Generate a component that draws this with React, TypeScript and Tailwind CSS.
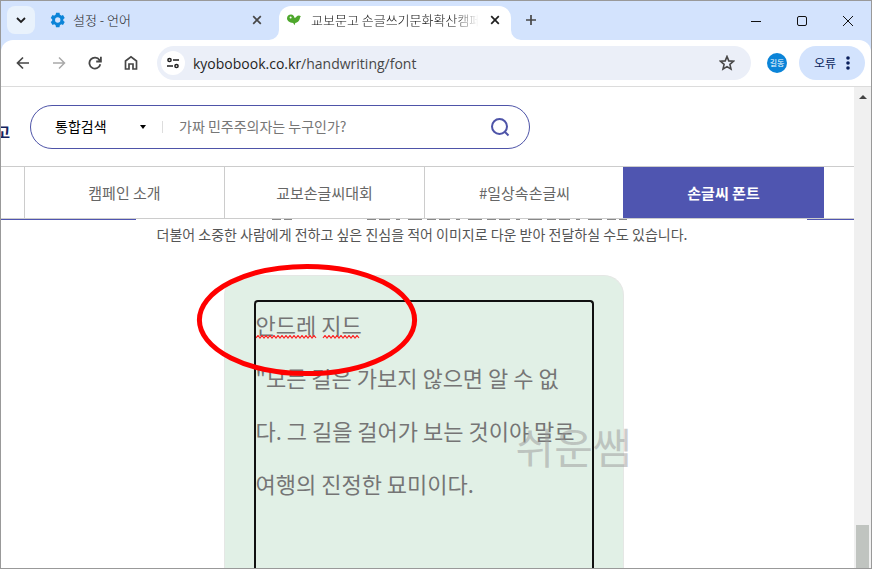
import React, { useState } from 'react';

const menus = ['캠페인 소개', '교보손글씨대회', '#일상속손글씨', '손글씨 폰트'];

const quote = `안드레 지드
"모든 길은 가보지 않으면 알 수 없
다. 그 길을 걸어가 보는 것이야 말로
여행의 진정한 묘미이다.`;

const iconButton = 'flex size-9 items-center justify-center';

const GearIcon = () => (
    <svg viewBox="0 0 24 24" className="size-4 shrink-0" fill="#0b84d8">
        <path d="M21.4 13.2a9 9 0 0 0 0-2.4l2.2-1.8-2.6-4.5-2.7 1a9 9 0 0 0-2-1.2L15.8 1.3h-5.200L9.9 4.3a9 9 0 0 0-2 1.2l-2.7-1L2.6 9l2.2 1.8a9 9 0 0 0 0 2.4L2.6 15l2.6 4.5 2.7-1a9 9 0 0 0 2 1.2l.6 3h5.2l.6-3a9 9 0 0 0 2-1.2l2.7 1 2.6-4.5zM13.1 16a4 4 0 1 1 0-8 4 4 0 0 1 0 8z" />
    </svg>
);

const LeafIcon = () => (
    <svg viewBox="0 0 14 14" className="size-3.5 shrink-0">
        <path d="M4 1.500C6 1.500 7.200 2.800 7.400 4.800C8.300 4.900 9 4.300 9.600 3.500C10.800 2.200 12.500 2.300 14 3.300C13.300 3.300 13.200 4.500 12.800 5.800C12 8.200 10.300 9.700 8.300 10L7.500 12.300L6.200 10C2.500 9.600 0 7.800 0 5.200C0 3 1.800 1.500 4 1.500z" fill="#4ea72c" />
        <circle cx="3.600" cy="4.600" r="1" fill="#fff" />
    </svg>
);

const CloseIcon = ({ color }: { color: string }) => (
    <svg viewBox="0 0 10 10" className="size-2.5" stroke={color} strokeWidth="1.7">
        <path d="M1.2 1.2l7.6 7.6M8.8 1.2L1.2 8.8" />
    </svg>
);

const TabStrip = () => (
    <div className="flex h-[39px] shrink-0 items-end bg-[#d3e3fd]">
        <div className="flex h-9 w-[34px] shrink-0 items-start justify-end">
            <button aria-label="탭 검색" className="mt-0.5 flex size-7 items-center justify-center rounded-lg bg-[#e9f2fc]">
                <svg viewBox="0 0 10 10" className="size-2.5" fill="none" stroke="#1f1f1f" strokeWidth="1.8">
                    <path d="M1 3l4 4 4-4" />
                </svg>
            </button>
        </div>
        <div className="flex h-9 w-[244px] shrink-0 items-center pb-1 pl-3.5">
            <GearIcon />
            <span className="ml-2 flex-1 text-[13px] font-light text-[#222]">설정 - 언어</span>
            <button aria-label="설정 탭 닫기" className="mr-3.5 flex size-4 items-center justify-center">
                <CloseIcon color="#474747" />
            </button>
        </div>
        <div className="relative flex h-[34px] w-[232px] shrink-0 items-center rounded-t-xl bg-white pb-1.5 pl-2">
            <svg viewBox="0 0 10 10" className="absolute right-full bottom-0 size-2.5" fill="#fff"><path d="M10 0v10H0A10 10 0 0 0 10 0z" /></svg>
            <svg viewBox="0 0 10 10" className="absolute bottom-0 left-full size-2.5" fill="#fff"><path d="M0 0v10h10A10 10 0 0 1 0 0z" /></svg>
            <LeafIcon />
            <span className="ml-2.5 w-[168px] overflow-hidden bg-linear-to-r from-[#111] from-85% to-transparent bg-clip-text text-[13px] font-light whitespace-nowrap text-transparent">
                교보문고 손글쓰기문화확산캠페인
            </span>
            <button aria-label="탭 닫기" className="ml-2 flex size-4 items-center justify-center">
                <CloseIcon color="#1f1f1f" />
            </button>
        </div>
        <button aria-label="새 탭" className="mb-1 ml-1 flex size-8 items-center justify-center">
            <svg viewBox="0 0 12 12" className="size-3" stroke="#474747" strokeWidth="1.7"><path d="M6 1v10M1 6h10" /></svg>
        </button>
        <div className="ml-auto flex h-full items-center">
            <button aria-label="최소화" className="flex w-[46px] justify-center">
                <svg viewBox="0 0 10 10" className="size-2.5" stroke="#111"><path d="M0 5.5h10" /></svg>
            </button>
            <button aria-label="최대화" className="flex w-[46px] justify-center">
                <svg viewBox="0 0 10 10" className="size-2.5" fill="none" stroke="#111"><rect x=".5" y=".5" width="9" height="9" rx="1.5" /></svg>
            </button>
            <button aria-label="닫기" className="flex w-[46px] justify-center">
                <svg viewBox="0 0 10 10" className="size-2.5" stroke="#111"><path d="M0 0l10 10M10 0L0 10" /></svg>
            </button>
        </div>
    </div>
);

const Toolbar = () => (
    <div className="shrink-0 bg-[#d3e3fd]">
        <div className="flex h-[47px] items-center rounded-t-xl border-b border-[#dcdcdc] bg-white pr-1.5 pl-1">
            <button aria-label="뒤로" className={iconButton}>
                <svg viewBox="0 0 14 14" className="size-3.5" fill="none" stroke="#474747" strokeWidth="1.7"><path d="M13 7H2M7 1.5L1.5 7 7 12.5" /></svg>
            </button>
            <button aria-label="앞으로" className={iconButton}>
                <svg viewBox="0 0 14 14" className="size-3.5" fill="none" stroke="#a9a9a9" strokeWidth="1.5"><path d="M1 7h11M7 1.5L12.5 7 7 12.5" /></svg>
            </button>
            <button aria-label="새로고침" className={iconButton}>
                <svg viewBox="0 0 14 14" className="size-3.5" fill="none" stroke="#474747" strokeWidth="1.8"><path d="M12.3 8.2A5.5 5.5 0 1 1 11.5 4L12.7 5.3M12.9.8v4.7H8.2" /></svg>
            </button>
            <button aria-label="홈" className={iconButton}>
                <svg viewBox="0 0 14 16" className="h-4 w-3.5" fill="none" stroke="#474747" strokeWidth="1.7"><path d="M1.5 14V6L7 1.8 12.5 6v8H9V9H5v5z" /></svg>
            </button>
            <div className="ml-2 flex h-[34px] flex-1 items-center rounded-full bg-[#ebeff8] pr-4 pl-1">
                <button aria-label="사이트 정보" className="flex size-6 items-center justify-center rounded-full bg-white">
                    <svg viewBox="0 0 12 12" className="size-3" fill="none" stroke="#1f1f1f" strokeWidth="1.5">
                        <circle cx="2.5" cy="3" r="1.6" /><path d="M6 3h6M0 9h6" /><circle cx="9.5" cy="9" r="1.6" />
                    </svg>
                </button>
                <div className="ml-2 flex-1 font-['Open_Sans'] text-[14px] text-[#474747]">
                    <span className="text-[#1f1f1f]">kyobobook.co.kr</span>/handwriting/font
                </div>
                <button aria-label="북마크">
                    <svg viewBox="0 0 16 16" className="size-4" fill="none" stroke="#474747" strokeWidth="1.6"><path d="M8 1.500l1.8 4.400 4.700.4-3.600 3.100 1.100 4.700L8 11.600l-4 2.500 1.100-4.700-3.600-3.100 4.700-.4z" /></svg>
                </button>
            </div>
            <button className="ml-4 size-5 rounded-full bg-[#0b84d8] text-[8px] leading-5 text-white">길동</button>
            <button className="ml-3 flex h-[34px] w-[66px] items-center justify-center gap-2.5 rounded-full bg-[#d3e3fd] text-[12px] text-[#0a1f5c]">
                오류
                <svg viewBox="0 0 4 14" className="h-3.5 w-1" fill="#0a1f5c"><circle cx="2" cy="2" r="1.8" /><circle cx="2" cy="7" r="1.8" /><circle cx="2" cy="12" r="1.8" /></svg>
            </button>
        </div>
    </div>
);

const SiteHeader = () => {
    const [keyword, setKeyword] = useState('');

    return (
        <header className="flex h-[79px] shrink-0 items-center">
            <span className="flex w-[9px] shrink-0 justify-end overflow-hidden pt-3 text-[15px] font-bold text-[#14235e]">고</span>
            <form className="ml-5 flex h-11 w-[500px] items-center rounded-full border border-[#4e54a8] pr-[19px] pl-6">
                <select aria-label="검색 범위" className="w-20 appearance-none text-[14px] text-black">
                    <option>통합검색</option>
                </select>
                <svg viewBox="0 0 6 4" className="ml-[5px] h-1 w-1.5"><path d="M0 0h6L3 4z" /></svg>
                <span className="ml-4 h-3 w-px bg-[#ddd]" />
                <input
                    aria-label="검색어"
                    className="ml-4 min-w-0 flex-1 text-[14px] placeholder:text-[#767676]"
                    placeholder="가짜 민주주의자는 누구인가?"
                    value={keyword}
                    onChange={(e) => setKeyword(e.target.value)}
                />
                <button type="button" aria-label="검색">
                    <svg viewBox="0 0 20 20" className="size-5" fill="none" stroke="#4e54a8" strokeWidth="2"><circle cx="9.5" cy="9.5" r="7.5" /><path d="M15 15l3.5 3.5" /></svg>
                </button>
            </form>
        </header>
    );
};

const Editor = () => {
    const [text, setText] = useState(quote);

    return (
        <div className="relative mx-auto mt-[27px] flex min-h-0 w-[400px] flex-1 rounded-t-[20px] border border-b-0 border-[#e5e7e5] bg-[#e1f0e6] px-[29px] pt-6">
            <div className="flex w-full overflow-hidden rounded-t border-2 border-b-0 border-[#111]">
                <textarea
                    aria-label="손글씨 문구"
                    spellCheck={false}
                    className="-mt-1 w-full resize-none overflow-hidden text-[22px] leading-[53px] whitespace-pre text-[#757575] outline-none"
                    value={text}
                    onChange={(e) => setText(e.target.value)}
                />
            </div>
            {/* Spelling marks */}
            <svg className="absolute top-[59px] left-[31px] h-1 w-[104px]" viewBox="0 0 104 4" fill="none" stroke="#f22" strokeWidth="1.2">
                <path d={'M0 3' + 'l2-2.5l2 2.5'.repeat(15) + 'M67 3' + 'l2-2.5l2 2.5'.repeat(9)} />
            </svg>
            <svg className="absolute -top-[13px] -left-[29px] h-[114px] w-[222px]" viewBox="0 0 222 114" fill="none">
                <ellipse cx="111" cy="57" rx="107.6" ry="53.6" stroke="#f00" strokeWidth="5" />
            </svg>
            <span className="absolute top-[138px] left-[291px] text-[42px] whitespace-nowrap text-[#999]/50">쉬운쌤</span>
        </div>
    );
};

const App: React.FC = () => {
    return (
        <div className="flex h-screen flex-col overflow-hidden border border-[#999] bg-white font-['Noto_Sans_CJK_KR',sans-serif]">
            <TabStrip />
            <Toolbar />
            <div className="flex min-h-0 flex-1">
                <main className="flex min-w-0 flex-1 flex-col">
                    <SiteHeader />
                    <nav className="flex h-[53px] shrink-0 border-y border-[#ccc] pl-[23px]">
                        {menus.map((menu) => (
                            <a
                                key={menu}
                                href="#"
                                className={`flex items-center justify-center pt-0.5 text-[15px] ${
                                    menu === '손글씨 폰트'
                                        ? '-ml-px w-[201px] bg-[#4f55b0] font-bold text-white'
                                        : 'w-[200px] border-l border-[#ccc] text-[#666]'
                                }`}
                            >
                                {menu}
                            </a>
                        ))}
                    </nav>
                    <div className="flex h-px shrink-0 justify-between">
                        <span className="w-[135px] bg-[#4f55b0]" />
                        <svg className="h-px w-[460px]" viewBox="0 0 460 1" stroke="#888">
                            <path d="M30 .5h20M125 .5h260" strokeDasharray="9 3 11 6 4 8 14 5" />
                        </svg>
                        <span className="w-[47px] bg-[#4f55b0]" />
                    </div>
                    <div className="flex min-h-0 flex-1 flex-col pr-2">
                        <p className="mx-auto h-7 w-[534px] shrink-0 text-[14px] leading-7 whitespace-nowrap text-[#555]">
                            더불어 소중한 사람에게 전하고 싶은 진심을 적어 이미지로 다운 받아 전달하실 수도 있습니다.
                        </p>
                        <Editor />
                    </div>
                </main>
                {/* Scrollbar */}
                <div className="flex w-[17px] shrink-0 flex-col items-center justify-between bg-[#f0f0f0]">
                    <svg viewBox="0 0 8 4" className="mt-2 h-1 w-2" fill="#444"><path d="M0 4l4-4 4 4z" /></svg>
                    <span className="h-[43px] w-[13px] bg-[#c0c4c0]" />
                </div>
            </div>
        </div>
    );
};

export default App;
